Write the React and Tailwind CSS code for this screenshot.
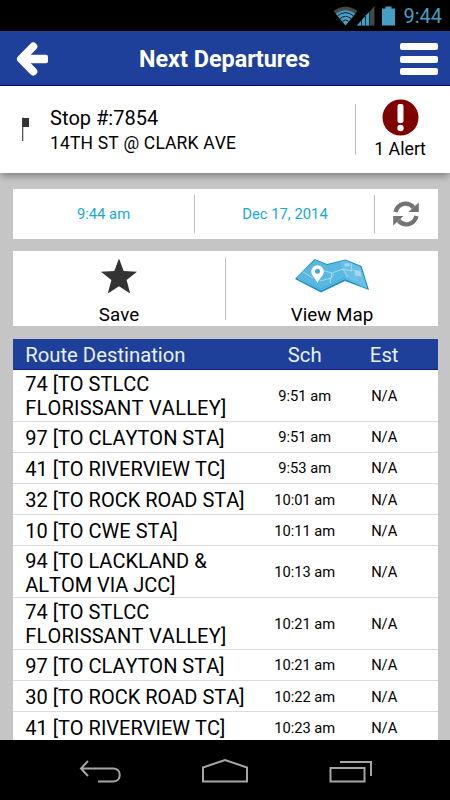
const departures = [
  { id: 1, lines: ['74 [TO STLCC', 'FLORISSANT VALLEY]'], sch: '9:51 am', est: 'N/A' },
  { id: 2, lines: ['97 [TO CLAYTON STA]'], sch: '9:51 am', est: 'N/A' },
  { id: 3, lines: ['41 [TO RIVERVIEW TC]'], sch: '9:53 am', est: 'N/A' },
  { id: 4, lines: ['32 [TO ROCK ROAD STA]'], sch: '10:01 am', est: 'N/A' },
  { id: 5, lines: ['10 [TO CWE STA]'], sch: '10:11 am', est: 'N/A' },
  { id: 6, lines: ['94 [TO LACKLAND &', 'ALTOM VIA JCC]'], sch: '10:13 am', est: 'N/A' },
  { id: 7, lines: ['74 [TO STLCC', 'FLORISSANT VALLEY]'], sch: '10:21 am', est: 'N/A' },
  { id: 8, lines: ['97 [TO CLAYTON STA]'], sch: '10:21 am', est: 'N/A' },
  { id: 9, lines: ['30 [TO ROCK ROAD STA]'], sch: '10:22 am', est: 'N/A' },
  { id: 10, lines: ['41 [TO RIVERVIEW TC]'], sch: '10:23 am', est: 'N/A' },
];

const StatusBar = () => (
  <div className="flex h-[31px] shrink-0 items-center justify-end bg-black pr-[8px] text-[#459fc4]">
    {/* Wifi */}
    <svg className="mr-[-1px] h-[20px] w-[25px]" viewBox="0 0 25 20" fill="none">
      <path d="M0.5 5 Q12.5 -3.5 24.5 5 L12.5 19.5 Z" fill="#474747" />
      <path d="M3 8 Q12.5 0.5 22 8 L12.5 19.5 Z" fill="currentColor" />
      <path d="M4.5 9.8 Q12.5 3.5 20.5 9.8 M7 12.6 Q12.5 8 18 12.6 M9.3 15.3 Q12.5 12.5 15.7 15.3" stroke="#0b1c25" strokeWidth="1" />
    </svg>
    {/* Signal */}
    <svg className="mr-[7px] h-[20px] w-[18px]" viewBox="0 0 18 20">
      <path d="M0 19.5 L17.5 0 V19.5 Z" fill="#474747" />
      <path d="M0 19.5 L12.5 5.5 V19.5 Z" fill="currentColor" />
      <path d="M4.5 14 V20 M8.5 9 V20 M12.5 5 V20" stroke="#10303e" strokeWidth="1" />
    </svg>
    {/* Battery */}
    <svg className="mr-[8px] h-[20px] w-[13px]" viewBox="0 0 13 20" fill="currentColor">
      <path d="M3.5 0.5 H9.5 V2.5 H13 V19.5 H0 V2.5 H3.5 Z" />
    </svg>
    <span className="pt-0.5 text-[20px] leading-[29px]">9:44</span>
  </div>
);

const Header = () => (
  <header className="flex h-[55px] shrink-0 items-center justify-between border-b border-[#000c6b] bg-[#1e3f9a] pt-[2px] pr-3 pl-4">
    <svg className="h-[36px] w-[33px]" viewBox="0 0 33 36" fill="none" stroke="#fff" strokeLinecap="round" strokeLinejoin="round">
      <path d="M17.3 5.5 L5 18 L17.3 30.5" strokeWidth="8" />
      <path d="M7 18 H30" strokeWidth="8.5" strokeLinecap="butt" />
      <path d="M30 15.8 V20.2" strokeWidth="4" />
    </svg>
    <h1 className="text-[23.4px] leading-[53px] font-bold text-white">Next Departures</h1>
    <div className="flex w-[38px] flex-col gap-[5.5px]">
      <span className="h-[7px] rounded-[2px] bg-white"></span>
      <span className="h-[7px] rounded-[2px] bg-white"></span>
      <span className="h-[7px] rounded-[2px] bg-white"></span>
    </div>
  </header>
);

const StopInfo = () => (
  <section className="z-10 flex h-[87px] shrink-0 bg-white shadow-[0_4px_7px_-1px_rgba(0,0,0,0.35)]">
    <div className="w-[50px] pt-[31px] pl-[22px]">
      <svg className="h-[24px] w-[8px]" viewBox="0 0 8 24">
        <rect x="0" y="0.5" width="1.3" height="23.5" fill="#555" />
        <rect x="0.5" y="1" width="6.5" height="9" fill="#333" />
      </svg>
    </div>
    <div className="flex-1 pt-[19px] whitespace-nowrap">
      <p className="text-[20px] leading-[26px]">Stop #:7854</p>
      <p className="text-[17.5px] leading-[25px] tracking-[0.17px]">14TH ST @ CLARK AVE</p>
    </div>
    <div className="mt-[18px] h-[51px] w-px bg-[#bdbdbd]"></div>
    <div className="flex w-[94px] flex-col items-center pt-[13px] pr-[6px]">
      <svg className="h-[37px] w-[37px]" viewBox="0 0 37 37">
        <circle cx="18.5" cy="18.5" r="18" fill="#800000" />
        <rect x="15.5" y="5" width="6" height="19" rx="2" fill="#fff" />
        <circle cx="18.5" cy="29" r="3.2" fill="#fff" />
      </svg>
      <p className="text-[17.8px] leading-[25px]">1 Alert</p>
    </div>
  </section>
);

const TimeBar = () => (
  <section className="flex h-[50px] shrink-0 items-center bg-white text-[14.8px] text-[#19a9d5]">
    <span className="w-[181px] pl-px text-center">9:44 am</span>
    <span className="h-[38px] w-px bg-[#bdbdbd]"></span>
    <span className="flex-1 pl-[2px] text-center">Dec 17, 2014</span>
    <span className="h-[38px] w-px bg-[#bdbdbd]"></span>
    <div className="flex w-[63px] justify-center">
      <svg className="h-[26px] w-[26px]" viewBox="0 0 26 26" fill="none" stroke="#747474" strokeWidth="4.4">
        <path d="M2.5 11 C5 2 15 0 20.5 6.5" />
        <path d="M23.5 15 C21 24 11 26 5.5 19.5" />
        <path d="M25.8 1.5 V11 H15.5 Z" fill="#747474" stroke="none" />
        <path d="M0.2 24.5 V15 H10.5 Z" fill="#747474" stroke="none" />
      </svg>
    </div>
  </section>
);

const MapIcon = () => (
  <svg className="h-[36px] w-[76px] shrink-0" viewBox="0 0 76 36" fill="none">
    <path d="M1 21 L20.5 1 L33 6 L51.5 1.5 L67.5 8 L75 32 L51 23 L27 34.5 Z" fill="#1b8fc4" />
    <path d="M3 19.5 L21 2 L33 7 L51.5 2.5 L66.5 9 L73 29.5 L51 19.5 L27 31 Z" fill="#58b8e2" />
    <path d="M51.5 2.5 L66.5 9 L73 29.5 L51 19.5 L46 4 Z" fill="#6abfe4" />
    <path d="M4 20.5 L27 32 L51 20.5 L73 30" stroke="#8fd3f0" strokeWidth="0.8" />
    <path d="M9 14 L19 20 M26 23 L37 20 L40 16 M27 12 L38 15 L49 11 L58 13 M38 15 L36 25 M57 5 L58 13 M49 11 L54 19" stroke="#b4e2f4" strokeWidth="0.8" />
    <path d="M50 6 L54.5 5 L56 8 L51 8.5 Z" fill="#a4d6ec" />
    <path d="M60 12 L66 12.5 L68 18.5 L61 17.5 Z" fill="#a4d6ec" />
    <path d="M23.5 25 C21 19.5 17.3 17.5 17.3 13.5 A6.2 6.2 0 0 1 29.7 13.5 C29.7 17.5 26 19.5 23.5 25 Z" fill="#fff" />
    <circle cx="23.5" cy="13.2" r="2.5" fill="#3fa9d6" />
  </svg>
);

const Actions = () => (
  <section className="flex h-[75px] bg-white text-[18.8px]">
    <button className="flex w-[212px] flex-col items-center pt-[7px] pl-px">
      <svg className="h-[37px] w-[36px] shrink-0" viewBox="0 0 36 37" fill="#333">
        <path d="M18 0.5 L22.7 13.1 L36 13.7 L25.6 22 L29.2 35.5 L18 28.3 L6.8 35.5 L10.4 22 L0 13.7 L13.3 13.1 Z" />
      </svg>
      <span className="mt-[7px] leading-[26px]">Save</span>
    </button>
    <div className="mt-[7px] h-[62px] w-px bg-[#bdbdbd]"></div>
    <button className="flex flex-1 flex-col items-center pt-[7px] pl-px">
      <MapIcon />
      <span className="mt-[8px] leading-[26px]">View Map</span>
    </button>
  </section>
);

const DepartureTable = () => (
  <section className="bg-white">
    <div className="flex h-[31px] items-center border-b border-[#0b237c] bg-[#1e3f9a] pt-[2px] pl-[12.7px] text-[20.3px] text-[#e8f0ff]">
      <span className="w-[239px]">Route Destination</span>
      <span className="w-[81px] text-center">Sch</span>
      <span className="w-[78px] text-center">Est</span>
    </div>
    {departures.map(({ id, lines, sch, est }) => (
      <div
        key={id}
        className={`flex items-center border-b border-[#dcdcdc] pl-[12.7px] ${lines.length > 1 ? 'h-[51.7px]' : 'h-[31.2px]'}`}
      >
        <div className="w-[239px] pt-[2px] text-[20px] leading-[24px] whitespace-nowrap">
          {lines.map((line) => (
            <p key={line} className={line.startsWith('FLORISSANT') ? 'tracking-[0.22px]' : 'tracking-normal'}>
              {line}
            </p>
          ))}
        </div>
        <span className="w-[81px] pt-px text-center text-[14.7px]">{sch}</span>
        <span className="w-[78px] pt-px text-center text-[14.7px]">{est}</span>
      </div>
    ))}
  </section>
);

const NavBar = () => (
  <nav className="z-10 flex h-[60px] shrink-0 items-center justify-between bg-black px-[78px] pt-[3px]">
    <svg className="h-[26px] w-[44px]" viewBox="0 0 44 26" fill="none" stroke="#a5a5a5" strokeWidth="2">
      <path d="M10 2 L3 9.5 L10 17 M3 9.5 H35 C44 9.5 44 22.5 35 22.5 H20" />
    </svg>
    <svg className="h-[26px] w-[48px]" viewBox="0 0 48 26" fill="none" stroke="#a5a5a5" strokeWidth="2">
      <path d="M2 8.5 L24 1 L46 8.5 V22.5 H2 Z" />
    </svg>
    <svg className="h-[26px] w-[44px]" viewBox="0 0 44 26" fill="none" stroke="#a5a5a5" strokeWidth="2">
      <path d="M2.5 9 H36.5 V22.5 H2.5 Z M12 3 H43 V17" />
    </svg>
  </nav>
);

export default function App() {
  return (
    <div className="flex h-[800px] w-[450px] flex-col overflow-hidden bg-[#c5c5c5] font-['Roboto',sans-serif] text-black [font-kerning:none]">
      <StatusBar />
      <Header />
      <StopInfo />
      <main className="flex min-h-0 flex-1 flex-col overflow-hidden px-[12.5px] pt-4">
        <TimeBar />
        <div className="mt-3 shrink-0">
          <Actions />
        </div>
        <div className="mt-[13px] shrink-0">
          <DepartureTable />
        </div>
      </main>
      <NavBar />
    </div>
  );
}
